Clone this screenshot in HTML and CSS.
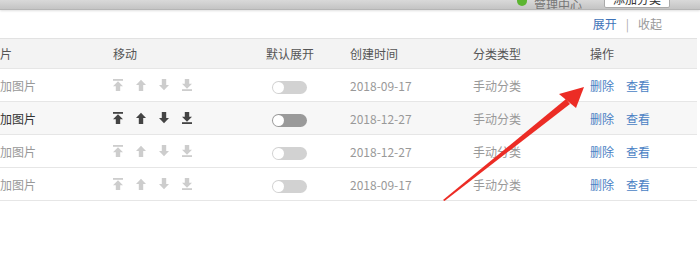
FILE: index.html
```html
<!DOCTYPE html>
<html lang="zh-CN">
<head>
	<meta charset="utf-8">
	<title>分类管理</title>
	<link rel="stylesheet" href="styles.css">
</head>
<body>
	<div class="topbar">
		<span class="ok-dot"></span>
		<span class="top-text">管理中心</span>
		<span class="top-btn">添加分类</span>
	</div>
	<div class="toolbar">
		<a class="t-link on">展开</a><span class="sep">|</span><a class="t-link">收起</a>
	</div>
	<table class="grid">
		<colgroup>
			<col style="width:125px"><col style="width:153px"><col style="width:84px"><col style="width:123px"><col style="width:117px"><col style="width:107px">
		</colgroup>
		<thead>
			<tr><th>图片</th><th>移动</th><th>默认展开</th><th>创建时间</th><th>分类类型</th><th>操作</th></tr>
		</thead>
		<tbody>
			<tr>
				<td>添加图片</td>
				<td><div class="moves">
					<svg viewBox="0 0 10 12"><rect x="0" y="0" width="10" height="1.8"/><polygon points="5,2.2 0,7.2 10,7.2"/><rect x="2.8" y="7" width="4.4" height="5"/></svg>
					<svg viewBox="0 0 10 12"><polygon points="5,0.8 0,6 10,6"/><rect x="2.8" y="5.8" width="4.4" height="6.2"/></svg>
					<svg viewBox="0 0 10 12"><rect x="2.8" y="0" width="4.4" height="6.2"/><polygon points="0,6 10,6 5,11.2"/></svg>
					<svg viewBox="0 0 10 12"><rect x="2.8" y="0" width="4.4" height="5"/><polygon points="0,4.8 10,4.8 5,9.8"/><rect x="0" y="10.2" width="10" height="1.8"/></svg>
				</div></td>
				<td><span class="switch"></span></td>
				<td>2018-09-17</td>
				<td>手动分类</td>
				<td><a class="op">删除</a><a class="op">查看</a></td>
			</tr>
			<tr class="active">
				<td>添加图片</td>
				<td><div class="moves">
					<svg viewBox="0 0 10 12"><rect x="0" y="0" width="10" height="1.8"/><polygon points="5,2.2 0,7.2 10,7.2"/><rect x="2.8" y="7" width="4.4" height="5"/></svg>
					<svg viewBox="0 0 10 12"><polygon points="5,0.8 0,6 10,6"/><rect x="2.8" y="5.8" width="4.4" height="6.2"/></svg>
					<svg viewBox="0 0 10 12"><rect x="2.8" y="0" width="4.4" height="6.2"/><polygon points="0,6 10,6 5,11.2"/></svg>
					<svg viewBox="0 0 10 12"><rect x="2.8" y="0" width="4.4" height="5"/><polygon points="0,4.8 10,4.8 5,9.8"/><rect x="0" y="10.2" width="10" height="1.8"/></svg>
				</div></td>
				<td><span class="switch"></span></td>
				<td>2018-12-27</td>
				<td>手动分类</td>
				<td><a class="op">删除</a><a class="op">查看</a></td>
			</tr>
			<tr>
				<td>添加图片</td>
				<td><div class="moves">
					<svg viewBox="0 0 10 12"><rect x="0" y="0" width="10" height="1.8"/><polygon points="5,2.2 0,7.2 10,7.2"/><rect x="2.8" y="7" width="4.4" height="5"/></svg>
					<svg viewBox="0 0 10 12"><polygon points="5,0.8 0,6 10,6"/><rect x="2.8" y="5.8" width="4.4" height="6.2"/></svg>
					<svg viewBox="0 0 10 12"><rect x="2.8" y="0" width="4.4" height="6.2"/><polygon points="0,6 10,6 5,11.2"/></svg>
					<svg viewBox="0 0 10 12"><rect x="2.8" y="0" width="4.4" height="5"/><polygon points="0,4.8 10,4.8 5,9.8"/><rect x="0" y="10.2" width="10" height="1.8"/></svg>
				</div></td>
				<td><span class="switch"></span></td>
				<td>2018-12-27</td>
				<td>手动分类</td>
				<td><a class="op">删除</a><a class="op">查看</a></td>
			</tr>
			<tr>
				<td>添加图片</td>
				<td><div class="moves">
					<svg viewBox="0 0 10 12"><rect x="0" y="0" width="10" height="1.8"/><polygon points="5,2.2 0,7.2 10,7.2"/><rect x="2.8" y="7" width="4.4" height="5"/></svg>
					<svg viewBox="0 0 10 12"><polygon points="5,0.8 0,6 10,6"/><rect x="2.8" y="5.8" width="4.4" height="6.2"/></svg>
					<svg viewBox="0 0 10 12"><rect x="2.8" y="0" width="4.4" height="6.2"/><polygon points="0,6 10,6 5,11.2"/></svg>
					<svg viewBox="0 0 10 12"><rect x="2.8" y="0" width="4.4" height="5"/><polygon points="0,4.8 10,4.8 5,9.8"/><rect x="0" y="10.2" width="10" height="1.8"/></svg>
				</div></td>
				<td><span class="switch"></span></td>
				<td>2018-09-17</td>
				<td>手动分类</td>
				<td><a class="op">删除</a><a class="op">查看</a></td>
			</tr>
		</tbody>
	</table>
	<!-- red annotation arrow drawn over the screenshot -->
	<svg class="mark" viewBox="0 0 700 275" width="700" height="275">
		<polygon points="443,200 444.5,201 570,104 566,99" fill="#ec2c25"/>
		<polygon points="584,87 559,94 576,108" fill="#ec2c25"/>
	</svg>
</body>
</html>
```

FILE: styles.css
```css
html,body{margin:0;padding:0;background:#fff;}
body{position:relative;width:700px;height:275px;overflow:hidden;font-family:"Noto Sans CJK SC","Liberation Sans",sans-serif;font-size:12px;color:#999;}

.topbar{height:9px;overflow:hidden;display:flex;justify-content:flex-end;align-items:flex-end;padding-right:30px;background:linear-gradient(#d9d9d9,#c4c4c4);border-bottom:1px solid #b5b5b5;box-shadow:0 1px 2px rgb(0 0 0/.12);}
.ok-dot{width:10px;height:10px;border-radius:50%;background:#5cb531;margin:0 7px 3px 0;}
.top-text{color:#777;margin-right:22px;line-height:14px;margin-bottom:-3px;}
.top-btn{height:18px;width:66px;box-sizing:border-box;background:#fff;border:1px solid #aaa;border-radius:2px;color:#333;text-align:center;line-height:16px;margin-bottom:1px;}

.toolbar{height:28px;line-height:28px;text-align:right;padding-right:38px;}
.t-link{color:#999;}
.t-link.on{color:#3d72b8;}
.sep{color:#aaa;margin:0 9px;}

.grid{border-collapse:collapse;table-layout:fixed;width:709px;margin-left:-12px;}
.grid th,.grid td{padding:0;text-align:left;white-space:nowrap;overflow:hidden;}
.grid th{height:29px;background:#f3f3f3;color:#555;font-weight:normal;border-top:1px solid #e2e2e2;border-bottom:1px solid #e6e6e6;}
.grid td{height:32px;border-bottom:1px solid #e6e6e6;}
.grid tr.active td{background:#f7f7f7;}
.grid tr.active td:first-child{color:#333;}

.moves{display:flex;gap:13px;align-items:center;}
.moves svg{width:10px;height:12px;fill:#cdcdcd;}
.active .moves svg{fill:#444;}

.switch{display:inline-block;vertical-align:middle;width:35px;height:13px;border-radius:7px;background:#d2d2d2;position:relative;margin-left:6px;}
.switch::before{content:"";position:absolute;left:1px;top:1px;width:11px;height:11px;border-radius:50%;background:#fff;}
.active .switch{background:#9a9a9a;}

.op{color:#4a7fc4;margin-right:12px;}

.mark{position:absolute;left:0;top:0;pointer-events:none;}
```
